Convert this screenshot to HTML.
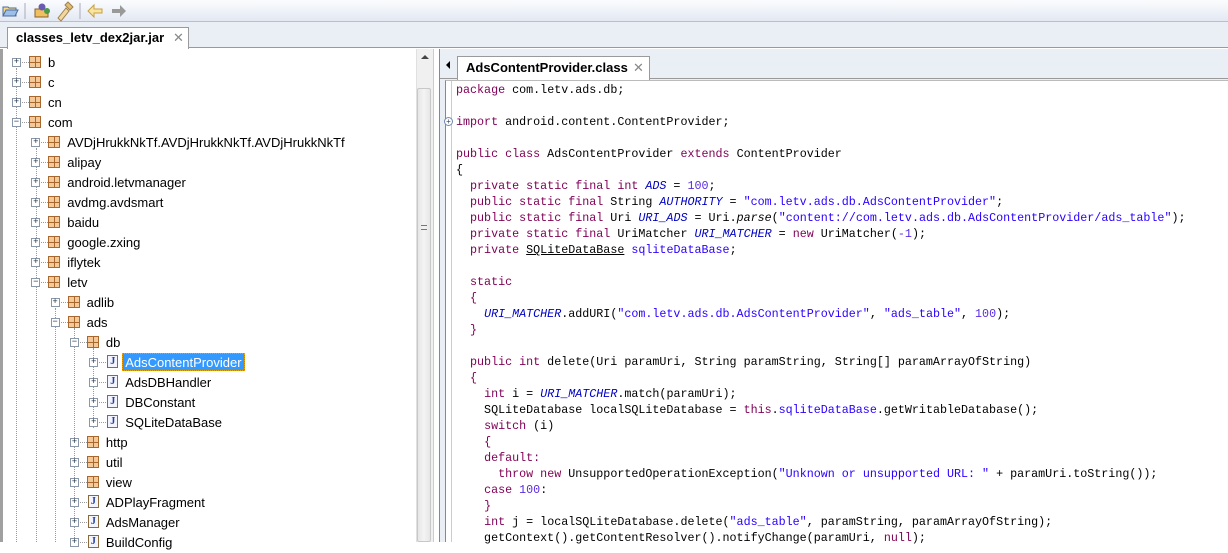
<!DOCTYPE html>
<html><head><meta charset="utf-8"><style>
*{margin:0;padding:0;box-sizing:border-box}
body{width:1228px;height:542px;overflow:hidden;background:#fff;font-family:"Liberation Sans","DejaVu Sans",sans-serif;position:relative}
.tb{position:absolute;left:0;top:0;width:1228px;height:22px;background:linear-gradient(#fbfcfe,#e3e8f2);border-bottom:1px solid #b8c0cc}
.tabbar{position:absolute;left:0;top:22px;width:1228px;height:26px;background:#eaeef5;border-bottom:1px solid #9a9a9a}
.tab{position:absolute;background:#fff;border:1px solid #9a9a9a;border-bottom:none;font-weight:bold;font-size:13px;color:#000;padding-left:8px;line-height:20px}
.x{position:absolute;color:#888;font-weight:normal;font-size:13px}
.left{position:absolute;left:0;top:49px;width:433px;height:493px;background:#fff;border-left:3px solid #a0a0a0}
.sb{position:absolute;left:416px;top:49px;width:17px;height:493px;background:#f0f0f0;border-left:1px solid #e0e0e0}
.thumb{position:absolute;left:417px;top:88px;width:14px;height:454px;background:linear-gradient(90deg,#e6e6e6,#f4f4f4,#e6e6e6);border:1px solid #c8c8c8;border-radius:2px}
.div{position:absolute;left:433px;top:49px;width:7px;height:493px;background:#fff;border-left:1px solid #ccc;border-right:1px solid #888}
.right{position:absolute;left:440px;top:49px;width:788px;height:493px;background:#eaeef5}
.code{position:absolute;left:445px;top:80px;width:783px;height:462px;background:#fff;border-left:1px solid #888;border-top:1px solid #bbb}
.gut{position:absolute;left:451px;top:81px;width:1px;height:461px;background:#ccc}
.r{position:absolute;height:20px;font-size:13px;line-height:20px;color:#000;white-space:nowrap}
.e{position:absolute;width:9px;height:9px;border:1px solid #8a97a9;background:#fff;font-size:9px;line-height:7px;text-align:center;color:#234;font-family:"Liberation Mono",monospace}
.pk{position:absolute;width:12px;height:12px;border:1px solid #a8672c;background:#f4c99a;background-image:linear-gradient(90deg,transparent 5px,#a8672c 5px,#a8672c 6px,transparent 6px),linear-gradient(transparent 5px,#a8672c 5px,#a8672c 6px,transparent 6px)}
.jf{position:absolute;width:11px;height:13px;border:1px solid #8a6a3a;background:#f4f4ff;font-size:10px;line-height:11px;text-align:center;color:#2040a0;font-weight:bold;font-family:"Liberation Serif",serif}
.dh{position:absolute;height:1px;border-top:1px dotted #999}
.dv{position:absolute;width:1px;border-left:1px dotted #999}
pre{position:absolute;left:456px;top:82px;font-family:"Liberation Mono",monospace;font-size:11.7px;line-height:16px;color:#000}
.k{color:#7f0055}.f{color:#0000c0;font-style:italic}.s{color:#2a00ff}.n{color:#5a2ce0}.u{text-decoration:underline}.i{font-style:italic}
</style></head><body>
<div class="tb">
<svg width="140" height="22" style="position:absolute;left:0;top:0">
<path d="M3 7h5l1 1h7v8H3z" fill="#f5d98a" stroke="#4d6c9c"/><path d="M3 16l3-6h12l-3 6z" fill="#9cc0ea" stroke="#4d6c9c"/>
<line x1="25" y1="3" x2="25" y2="19" stroke="#aab"/>
<path d="M35 9h13v8H35z" fill="#f0c060" stroke="#8a6030"/><circle cx="42" cy="7" r="3.5" fill="#6a5ab0"/><circle cx="47" cy="11" r="3" fill="#4a9a4a"/>
<path d="M58 18l8-10 3 3-8 10z" fill="#f0d8a0" stroke="#a08050"/><path d="M65 5l5 5 3-3-5-5z" fill="#e0c070" stroke="#a08050"/>
<line x1="80" y1="3" x2="80" y2="19" stroke="#aab"/>
<path d="M88 11l6-6v4h8v4h-8v4z" fill="#fae5a0" stroke="#c8a040"/>
<path d="M126 11l-6-6v4h-8v4h8v4z" fill="#999"/>
</svg></div>
<div class="tabbar"></div>
<div class="tab" style="left:7px;top:27px;width:182px;height:22px">classes_letv_dex2jar.jar<span class="x" style="left:165px">✕</span></div>
<div class="left"></div>
<div class="sb"><div style="position:absolute;left:4px;top:6px;border:4px solid transparent;border-bottom:4px solid #444;border-top:none"></div></div>
<div class="thumb"><div style="position:absolute;left:3px;top:136px;width:6px;height:5px;border-top:1px solid #777;border-bottom:1px solid #777"></div></div>
<div class="div"></div>
<div class="right"></div>
<div style="position:absolute;left:440px;top:50px;width:788px;height:29px;background:#eaeef5;border-bottom:1px solid #999"></div>
<div style="position:absolute;left:446px;top:61px;border:4px solid transparent;border-right:4px solid #000;border-left:none"></div>
<div class="tab" style="left:457px;top:56px;width:193px;height:24px;line-height:22px">AdsContentProvider.class<span class="x" style="left:175px">✕</span></div>
<div class="code"></div><div class="gut"></div>
<div style="position:absolute;left:444px;top:117px;width:9px;height:9px;border:1px solid #7088b0;border-radius:50%;font-size:8px;line-height:7px;text-align:center;color:#345;background:#fff">+</div>
<div id="tree"></div>
<pre><span class="k">package</span> com.letv.ads.db;

<span class="k">import</span> android.content.ContentProvider;

<span class="k">public class</span> AdsContentProvider <span class="k">extends</span> ContentProvider
{
  <span class="k">private static final int</span> <span class="f">ADS</span> = <span class="n">100</span>;
  <span class="k">public static final</span> String <span class="f">AUTHORITY</span> = <span class="s">"com.letv.ads.db.AdsContentProvider"</span>;
  <span class="k">public static final</span> Uri <span class="f">URI_ADS</span> = Uri.<span class="i">parse</span>(<span class="s">"content://com.letv.ads.db.AdsContentProvider/ads_table"</span>);
  <span class="k">private static final</span> UriMatcher <span class="f">URI_MATCHER</span> = <span class="k">new</span> UriMatcher(<span class="n">-1</span>);
  <span class="k">private</span> <span class="u">SQLiteDataBase</span> <span class="s">sqliteDataBase</span>;

  <span class="k">static</span>
  <span class="k">{</span>
    <span class="f">URI_MATCHER</span>.addURI(<span class="s">"com.letv.ads.db.AdsContentProvider"</span>, <span class="s">"ads_table"</span>, <span class="n">100</span>);
  <span class="k">}</span>

  <span class="k">public int</span> delete(Uri paramUri, String paramString, String[] paramArrayOfString)
  <span class="k">{</span>
    <span class="k">int</span> i = <span class="f">URI_MATCHER</span>.match(paramUri);
    SQLiteDatabase localSQLiteDatabase = <span class="k">this</span>.<span class="s">sqliteDataBase</span>.getWritableDatabase();
    <span class="k">switch</span> (i)
    <span class="k">{</span>
    <span class="k">default:</span>
      <span class="k">throw new</span> UnsupportedOperationException(<span class="s">"Unknown or unsupported URL: "</span> + paramUri.toString());
    <span class="k">case</span> <span class="n">100</span>:
    <span class="k">}</span>
    <span class="k">int</span> j = localSQLiteDatabase.delete(<span class="s">"ads_table"</span>, paramString, paramArrayOfString);
    getContext().getContentResolver().notifyChange(paramUri, <span class="k">null</span>);
</pre>
<script>
var rows=[[0,'b',0,'+'],[0,'c',0,'+'],[0,'cn',0,'+'],[0,'com',0,'-'],[1,'AVDjHrukkNkTf.AVDjHrukkNkTf.AVDjHrukkNkTf',0,'+'],[1,'alipay',0,'+'],[1,'android.letvmanager',0,'+'],[1,'avdmg.avdsmart',0,'+'],[1,'baidu',0,'+'],[1,'google.zxing',0,'+'],[1,'iflytek',0,'+'],[1,'letv',0,'-'],[2,'adlib',0,'+'],[2,'ads',0,'-'],[3,'db',0,'-'],[4,'AdsContentProvider',1,'+'],[4,'AdsDBHandler',1,'+'],[4,'DBConstant',1,'+'],[4,'SQLiteDataBase',1,'+'],[3,'http',0,'+'],[3,'util',0,'+'],[3,'view',0,'+'],[3,'ADPlayFragment',1,'+'],[3,'AdsManager',1,'+'],[3,'BuildConfig',1,'+']];
var h='';
// vertical guide lines
[[16,68,542],[36,148,542],[55,308,542],[74,328,542],[93,348,428]].forEach(function(v){h+='<div class="dv" style="left:'+v[0]+'px;top:'+v[1]+'px;height:'+(v[2]-v[1])+'px"></div>';});
rows.forEach(function(r,i){
 var y=52+i*20, x=16+r[0]*19.3;
 h+='<div class="dh" style="left:'+(x+4)+'px;top:'+(y+10)+'px;width:9px"></div>';
 h+='<div class="e" style="left:'+(x-4)+'px;top:'+(y+6)+'px">'+(r[3]=='+'?'+':'−')+'</div>';
 if(r[2])h+='<div class="jf" style="left:'+(x+14)+'px;top:'+(y+3)+'px">J</div>';
 else h+='<div class="pk" style="left:'+(x+13)+'px;top:'+(y+4)+'px"></div>';
 var sel=(r[1]=='AdsContentProvider');
 h+='<div class="r" style="left:'+(x+(sel?29:32))+'px;top:'+(y+1)+'px;'+(sel?'background:#3399ff;color:#fff;padding:0 2px;height:18px;line-height:18px;border:1px dotted #f0a000':'')+'">'+r[1]+'</div>';
});
document.getElementById('tree').innerHTML=h;
</script>
</body></html>
